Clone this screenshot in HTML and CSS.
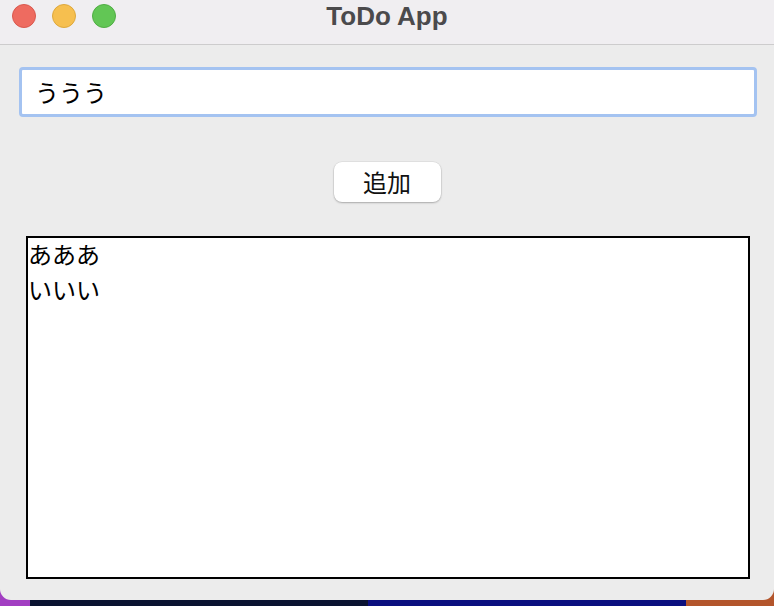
FILE: index.html
```html
<!DOCTYPE html>
<html lang="ja">
<head>
<meta charset="utf-8">
<title>ToDo App</title>
<link rel="stylesheet" href="styles.css">
</head>
<body>
<div class="window">
  <div class="titlebar">
    <div class="lights">
      <span class="light red"></span>
      <span class="light yellow"></span>
      <span class="light green"></span>
    </div>
    <div class="title">ToDo App</div>
  </div>
  <div class="content">
    <div class="field">ううう</div>
    <div class="btn-row"><button class="btn">追加</button></div>
    <div class="list">
      <div class="items">
        <div class="item">あああ</div>
        <div class="item">いいい</div>
      </div>
    </div>
  </div>
</div>
</body>
</html>
```
FILE: styles.css
```css
html, body {
  margin: 0;
  padding: 0;
}
body {
  width: 774px;
  height: 606px;
  overflow: hidden;
  background: linear-gradient(90deg, #a23ec2 0 30px, #0a1331 30px 368px, #0b0f7f 368px 686px, #b3552b 686px);
  font-family: "Noto Sans CJK JP", "Liberation Sans", sans-serif;
  color: #000;
}
.window {
  height: 600px;
  background: #ececec;
  border-radius: 0 0 11px 11px;
  display: flex;
  flex-direction: column;
  overflow: hidden;
}
.titlebar {
  height: 44px;
  flex: none;
  background: #f0eef1;
  border-bottom: 1px solid #cdcccd;
  position: relative;
  display: flex;
  align-items: center;
}
.lights {
  display: flex;
  gap: 16px;
  padding-left: 12px;
  margin-top: -12px;
}
.light {
  width: 24px;
  height: 24px;
  border-radius: 50%;
  box-sizing: border-box;
}
.red { background: #ee6b60; border: 1px solid #d9584e; }
.yellow { background: #f6bf4f; border: 1px solid #dea83c; }
.green { background: #62c655; border: 1px solid #50ad44; }
.title {
  position: absolute;
  left: 0;
  right: 0;
  top: 1px;
  text-align: center;
  font-family: "Liberation Sans", "Noto Sans", sans-serif;
  font-weight: bold;
  font-size: 26px;
  line-height: 30px;
  color: #4b4a4c;
}
.content {
  flex: 1;
  display: flex;
  flex-direction: column;
  padding: 22px 17px 21px 19px;
  min-height: 0;
}
.field {
  height: 50px;
  box-sizing: border-box;
  border: 3px solid #a4c3f1;
  border-radius: 4px;
  background: #fff;
  padding-left: 13px;
  font-size: 24px;
  line-height: 44px;
}
.btn-row {
  display: flex;
  justify-content: center;
  margin-top: 45px;
  padding-right: 2px;
}
.btn {
  width: 107px;
  height: 40px;
  border: none;
  border-radius: 8px;
  background: #fff;
  box-shadow: 0 1px 2px rgba(0,0,0,0.25), 0 0 0 0.5px rgba(0,0,0,0.08);
  font-family: "Noto Sans CJK JP", sans-serif;
  font-size: 24px;
  line-height: 40px;
  color: #111;
  padding: 0;
}
.list {
  flex: 1;
  margin: 34px 7px 0 7px;
  border: 2px solid #000;
  background: #fff;
  padding: 0;
  overflow: hidden;
}
.items {
  margin-top: -2px;
}
.item {
  font-size: 24px;
  line-height: 35px;
}
```
